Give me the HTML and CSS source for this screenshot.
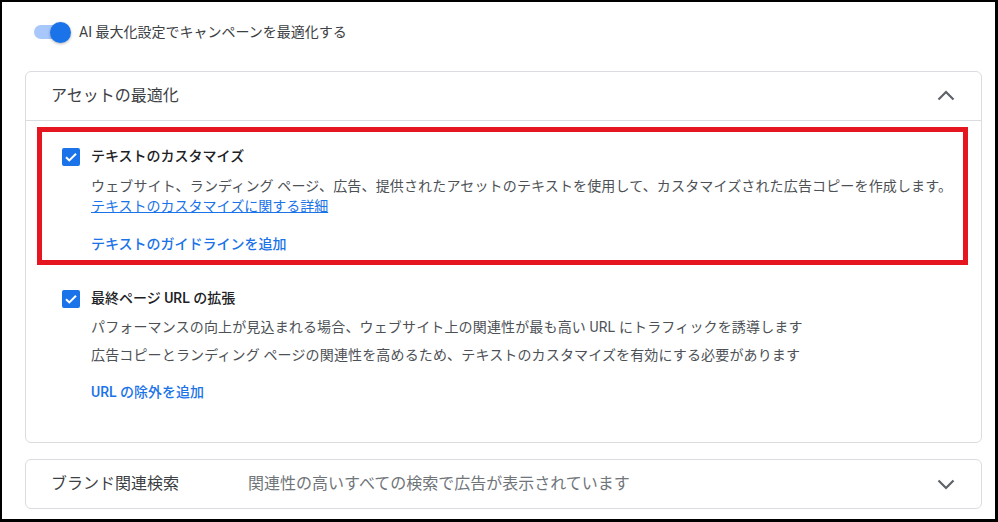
FILE: index.html
```html
<!DOCTYPE html>
<html lang="ja">
<head>
<meta charset="utf-8">
<title>アセットの最適化</title>
<link rel="stylesheet" href="styles.css">
</head>
<body>
<div class="frame">
  <div class="toggle-row">
    <span class="toggle"><span class="track"></span><span class="knob"></span></span>
    <span class="toggle-label">AI 最大化設定でキャンペーンを最適化する</span>
  </div>

  <section class="card">
    <div class="card-header">
      <span class="card-title">アセットの最適化</span>
      <svg class="chev" width="24" height="24" viewBox="0 0 24 24"><path d="M4.5 15.5L12 8l7.5 7.5" fill="none" stroke="#5f6368" stroke-width="2.2"/></svg>
    </div>
    <div class="card-body">
      <div class="highlight">
        <div class="option opt-first">
          <svg class="cb" width="18" height="18" viewBox="0 0 18 18"><rect x="0" y="0" width="18" height="18" rx="2" fill="#1a73e8"/><path d="M4 9.2l3.3 3.2L14 5.8" fill="none" stroke="#fff" stroke-width="2"/></svg>
          <div class="opt-text">
            <div class="opt-title">テキストのカスタマイズ</div>
            <div class="opt-desc first-desc">ウェブサイト、ランディング ページ、広告、提供されたアセットのテキストを使用して、カスタマイズされた広告コピーを作成します。</div>
            <a class="detail-link" href="#">テキストのカスタマイズに関する詳細</a>
            <div class="action-link act-first">テキストのガイドラインを追加</div>
          </div>
        </div>
      </div>

      <div class="option opt-second">
        <svg class="cb" width="18" height="18" viewBox="0 0 18 18"><rect x="0" y="0" width="18" height="18" rx="2" fill="#1a73e8"/><path d="M4 9.2l3.3 3.2L14 5.8" fill="none" stroke="#fff" stroke-width="2"/></svg>
        <div class="opt-text">
          <div class="opt-title">最終ページ URL の拡張</div>
          <div class="opt-desc second-desc">パフォーマンスの向上が見込まれる場合、ウェブサイト上の関連性が最も高い URL にトラフィックを誘導します</div>
          <div class="opt-desc third-desc">広告コピーとランディング ページの関連性を高めるため、テキストのカスタマイズを有効にする必要があります</div>
          <div class="action-link act-second">URL の除外を追加</div>
        </div>
      </div>
    </div>
  </section>

  <section class="card card-collapsed">
    <div class="card-header">
      <span class="card-title brand-title">ブランド関連検索</span>
      <span class="card-summary">関連性の高いすべての検索で広告が表示されています</span>
      <svg class="chev" width="24" height="24" viewBox="0 0 24 24"><path d="M4.5 8.5L12 16l7.5-7.5" fill="none" stroke="#5f6368" stroke-width="2.2"/></svg>
    </div>
  </section>
</div>
</body>
</html>
```

FILE: styles.css
```css
html, body {
  margin: 0;
  padding: 0;
  background: #ffffff;
}

body {
  font-family: "Roboto", "Noto Sans CJK JP", sans-serif;
  color: #3c4043;
}

.frame {
  box-sizing: border-box;
  width: 998px;
  height: 522px;
  border-style: solid;
  border-color: #000;
  border-width: 2px 3px 3px 2px;
  padding: 20px 13px 0 23px;
  overflow: hidden;
}

.toggle-row {
  display: flex;
  align-items: center;
  height: 20px;
  padding-left: 9px;
}

.toggle {
  position: relative;
  width: 37px;
  height: 21px;
  flex: none;
}

.track {
  position: absolute;
  left: 0;
  top: 3px;
  width: 34px;
  height: 14px;
  border-radius: 7px;
  background: #a8c7fa;
}

.knob {
  position: absolute;
  left: 16px;
  top: 0;
  width: 21px;
  height: 21px;
  border-radius: 50%;
  background: #1a73e8;
  box-shadow: 0 1px 3px rgba(0, 0, 0, 0.3);
}

.toggle-label {
  margin-left: 8px;
  font-size: 14px;
  line-height: 20px;
  color: #3c4043;
}

.card {
  margin-top: 29px;
  border: 1px solid #dadce0;
  border-radius: 6px;
  background: #fff;
}

.card-header {
  display: flex;
  align-items: center;
  height: 48px;
  padding: 0 23px 0 25px;
}

.card-title {
  flex: 1;
  font-size: 16px;
  line-height: 24px;
  color: #3c4043;
}

.chev {
  flex: none;
  display: block;
}

.card-body {
  border-top: 1px solid #dadce0;
  padding: 6px 13px 40px 11px;
}

.highlight {
  border: 5px solid #e5161f;
  padding: 14px 0 6px 20px;
}

.option {
  display: flex;
  align-items: flex-start;
}

.opt-second {
  margin-top: 23px;
  padding-left: 25px;
}

.cb {
  flex: none;
  margin-top: 2px;
  margin-right: 11px;
}

.opt-text {
  flex: 1;
  min-width: 0;
}

.opt-title {
  font-size: 14px;
  line-height: 20px;
  font-weight: 500;
  color: #202124;
}

.opt-desc {
  font-size: 14px;
  line-height: 20px;
  letter-spacing: 0.15px;
  color: #4d5156;
}

.first-desc {
  margin-top: 10px;
}

.second-desc {
  margin-top: 9px;
}

.third-desc {
  margin-top: 8px;
}

.detail-link {
  display: inline-block;
  font-size: 14px;
  line-height: 20px;
  color: #1a73e8;
  text-decoration: underline;
}

.action-link {
  font-size: 14px;
  line-height: 20px;
  font-weight: 500;
  color: #1a73e8;
}

.act-first {
  margin-top: 18px;
}

.act-second {
  margin-top: 17px;
}

.card-collapsed {
  margin-top: 16px;
}

.brand-title {
  flex: none;
  width: 197px;
}

.card-summary {
  flex: 1;
  font-size: 16px;
  line-height: 24px;
  color: #70757a;
}
```
